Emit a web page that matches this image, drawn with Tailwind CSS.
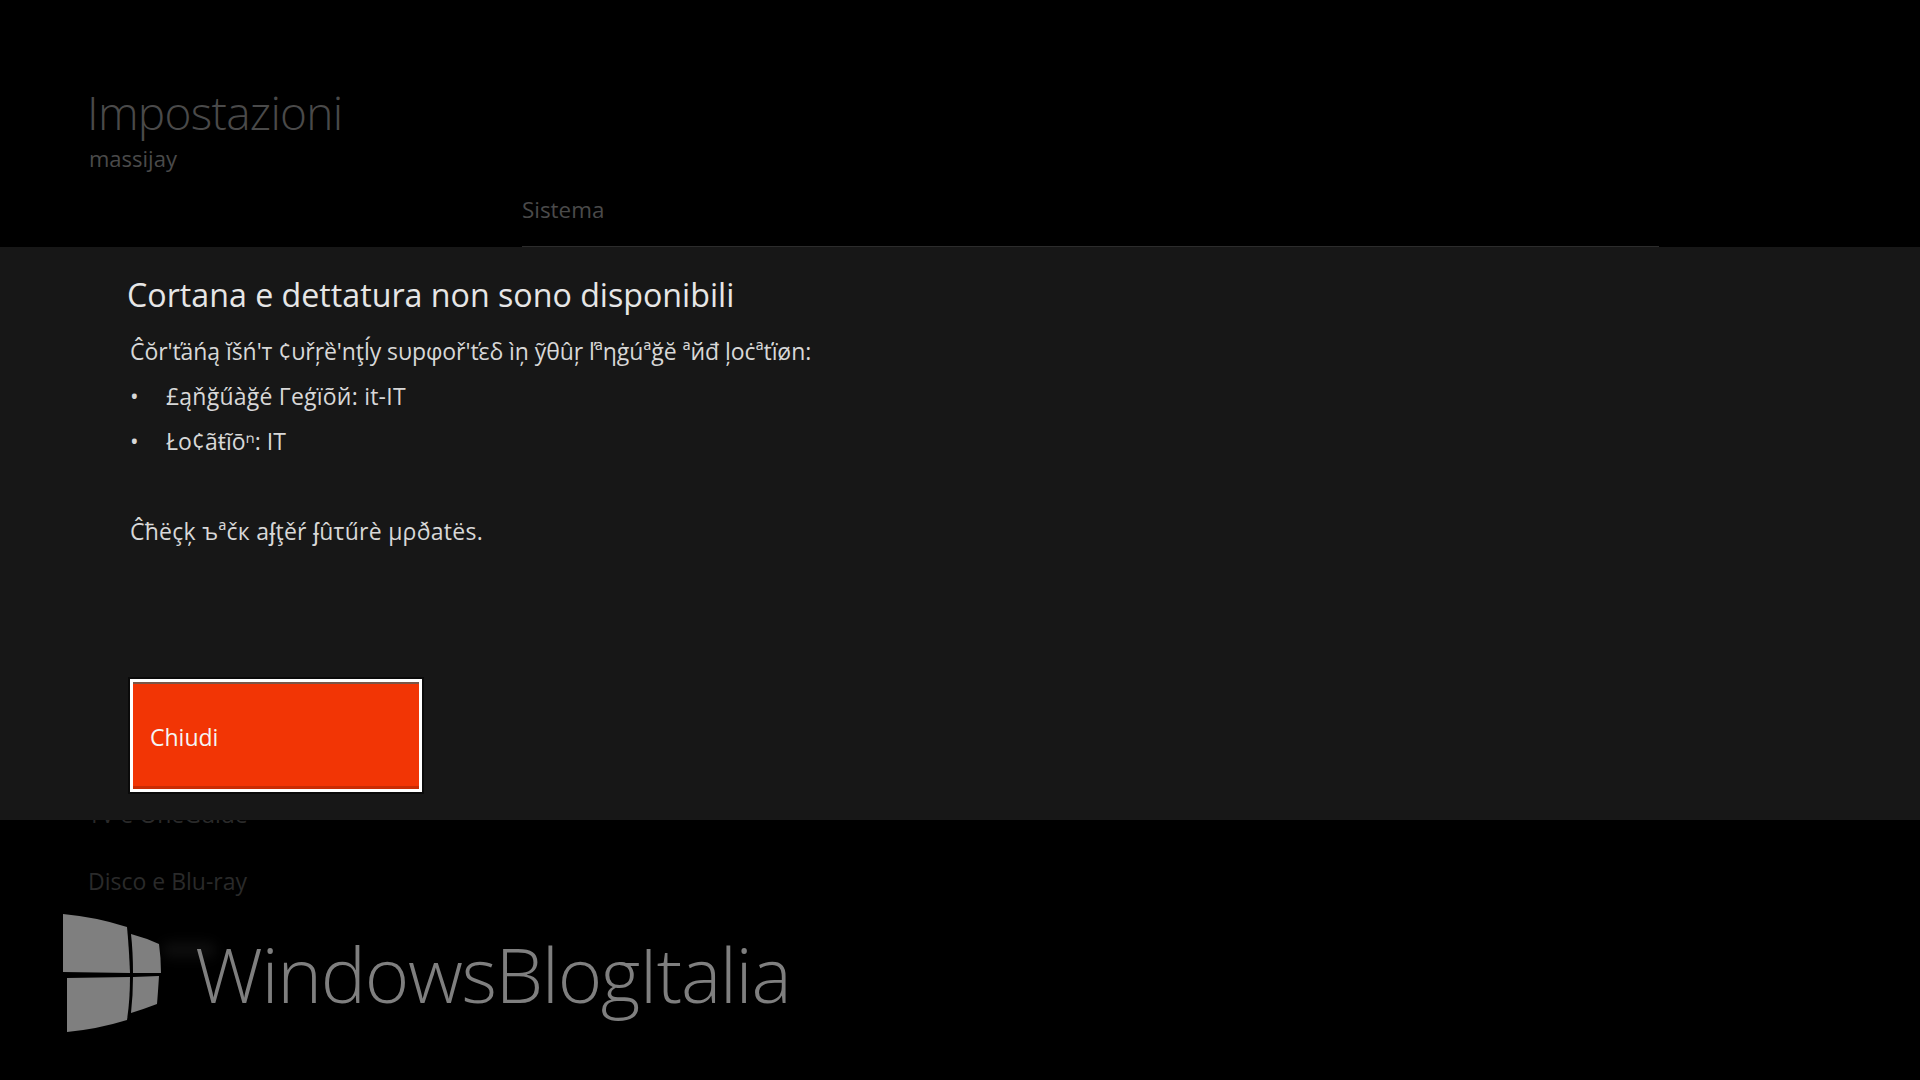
<!DOCTYPE html>
<html lang="it">

<head>
    <meta charset="UTF-8">
    <title>Impostazioni</title>
    <script src="https://cdn.jsdelivr.net/npm/@tailwindcss/browser@4"></script>
</head>

<body class="bg-black">
    <div class="relative h-[1080px] w-[1920px] overflow-hidden bg-black font-['Open_Sans','Noto_Sans',sans-serif]">

        <!-- settings page behind the dialog -->
        <header class="pl-[87px] pt-[81px]">
            <h1 class="text-[46px] leading-[62px] font-light text-[#4a4a4a] tracking-[-0.7px]">Impostazioni</h1>
            <p class="text-[22px] leading-[30px] text-[#4a4a4a] pl-[2px]">massijay</p>
        </header>
        <div class="ml-[522px] mr-[261px] mt-[22px] h-[52px] border-b border-[#2c2c2c] text-[22.4px] leading-[30px] text-[#4a4a4a]">
            Sistema
        </div>
        <nav class="pl-[88px] pt-[552px] flex flex-col gap-[37px] text-[23px] leading-[30px] text-[#2a2a2a]">
            <span>TV e OneGuide</span>
            <span>Disco e Blu-ray</span>
        </nav>

        <!-- dialog -->
        <div class="absolute inset-x-0 top-[247px] h-[573px] bg-[#171717] pl-[130px] pt-[26px]">
            <h2 class="-ml-[3px] text-[32.2px] leading-[44px] text-[#e6e6e6]">Cortana e dettatura non sono disponibili</h2>
            <div class="mt-[12px] text-[23px] leading-[45px] text-[#d8d8d8]">
                <p class="tracking-[-0.07px]">Ĉŏr'ťäńą ĭšń'т ¢υřŗȅ'nţĺy sυpφoř'ťεδ ìņ ỹθûŗ ľªηġúªğĕ ªйđ ļoċªťïøn:</p>
                <ul>
                    <li class="flex tracking-[0.22px]"><span class="w-[36px]">•</span>£ąňğűàğé Гeģïõй: it-IT</li>
                    <li class="flex"><span class="w-[36px]">•</span>Ło¢ãŧĩōⁿ: IT</li>
                </ul>
                <p class="mt-[45px] tracking-[0.26px]">Ĉħëçķ ъªčк aʄţěŕ ʄûτűrè μρðatës.</p>
            </div>
            <button class="mt-[125px] flex h-[113px] w-[292px] items-center border-[3px] border-white bg-[#f23505] pl-[17px] pt-[4px] text-[23px] text-[#f5f5f5] shadow-[inset_0_2px_0_#7a5648,inset_0_-3px_0_#c92c04,0_0_0_2px_#0a0a0a]">
                Chiudi
            </button>
        </div>

        <!-- smudge left by the watermark over the last menu row -->
        <div class="absolute left-[162px] top-[942px] h-[16px] w-[54px] rounded-full bg-white/5 blur-[6px]"></div>

        <!-- watermark -->
        <div class="absolute left-[60px] top-[910px] flex items-start">
            <svg class="h-[126px] w-[104px]" viewBox="0 0 104 126" fill="#7f7f7f">
                <path d="M3 4 Q36 7 67 17 Q69 38 70 63 L3 62 Z" />
                <path d="M71 24 Q86 28 99 34 Q101 48 101 63 L73 63 Q73 42 71 24 Z" />
                <path d="M7 68 L70 67 Q70 90 67 110 Q38 119 7 122 Z" />
                <path d="M73 67 L99 66 Q98 82 97 94 Q84 99 71 103 Q73 85 73 67 Z" />
            </svg>
            <span class="ml-[31px] mt-[14px] text-[76px] leading-[100px] font-light text-[#7f7f7f] tracking-[-1.35px]">WindowsBlogItalia</span>
        </div>
    </div>
</body>

</html>
